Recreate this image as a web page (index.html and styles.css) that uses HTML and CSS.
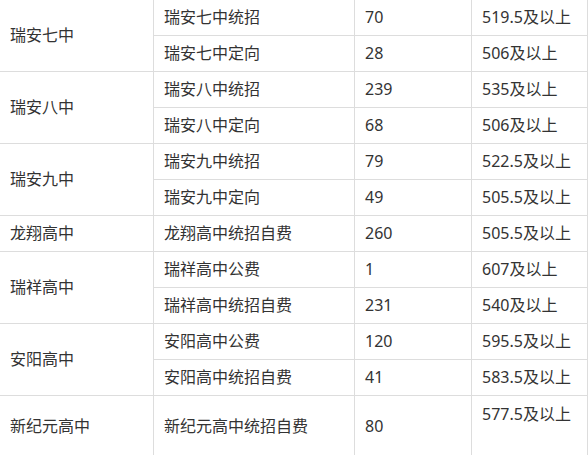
FILE: index.html
```html
<!DOCTYPE html>
<html lang="zh-CN">
<head>
<meta charset="utf-8">
<title>瑞安高中招生</title>
<link rel="stylesheet" href="styles.css">
</head>
<body>
<table class="score-table">
  <colgroup>
    <col class="c1"><col class="c2"><col class="c3"><col class="c4">
  </colgroup>
  <tbody>
    <tr><td rowspan="2">瑞安七中</td><td>瑞安七中统招</td><td>70</td><td>519.5及以上</td></tr>
    <tr><td>瑞安七中定向</td><td>28</td><td>506及以上</td></tr>
    <tr><td rowspan="2">瑞安八中</td><td>瑞安八中统招</td><td>239</td><td>535及以上</td></tr>
    <tr><td>瑞安八中定向</td><td>68</td><td>506及以上</td></tr>
    <tr><td rowspan="2">瑞安九中</td><td>瑞安九中统招</td><td>79</td><td>522.5及以上</td></tr>
    <tr><td>瑞安九中定向</td><td>49</td><td>505.5及以上</td></tr>
    <tr><td>龙翔高中</td><td>龙翔高中统招自费</td><td>260</td><td>505.5及以上</td></tr>
    <tr><td rowspan="2">瑞祥高中</td><td>瑞祥高中公费</td><td>1</td><td>607及以上</td></tr>
    <tr><td>瑞祥高中统招自费</td><td>231</td><td>540及以上</td></tr>
    <tr><td rowspan="2">安阳高中</td><td>安阳高中公费</td><td>120</td><td>595.5及以上</td></tr>
    <tr><td>安阳高中统招自费</td><td>41</td><td>583.5及以上</td></tr>
    <tr class="tall"><td>新纪元高中</td><td>新纪元高中统招自费</td><td>80</td><td class="top">577.5及以上</td></tr>
  </tbody>
</table>
</body>
</html>
```

FILE: styles.css
```css
html, body {
  margin: 0;
  padding: 0;
  background: #ffffff;
}

.score-table {
  border-collapse: collapse;
  table-layout: fixed;
  width: 588px;
  margin: -1px 0 0 -1px;
  font-family: "Noto Sans", "Noto Sans CJK SC", sans-serif;
  font-size: 16px;
  color: #333333;
}

.c1 { width: 154px; }
.c2 { width: 201px; }
.c3 { width: 117px; }
.c4 { width: 116px; }

.score-table td {
  border: 1px solid #dddddd;
  padding: 8px 10px;
  line-height: 19px;
  height: 19px;
  vertical-align: middle;
  text-align: left;
  white-space: nowrap;
}

.score-table tr.tall td {
  height: 43px;
}

.score-table td.top {
  vertical-align: top;
  padding-top: 9px;
}
```
